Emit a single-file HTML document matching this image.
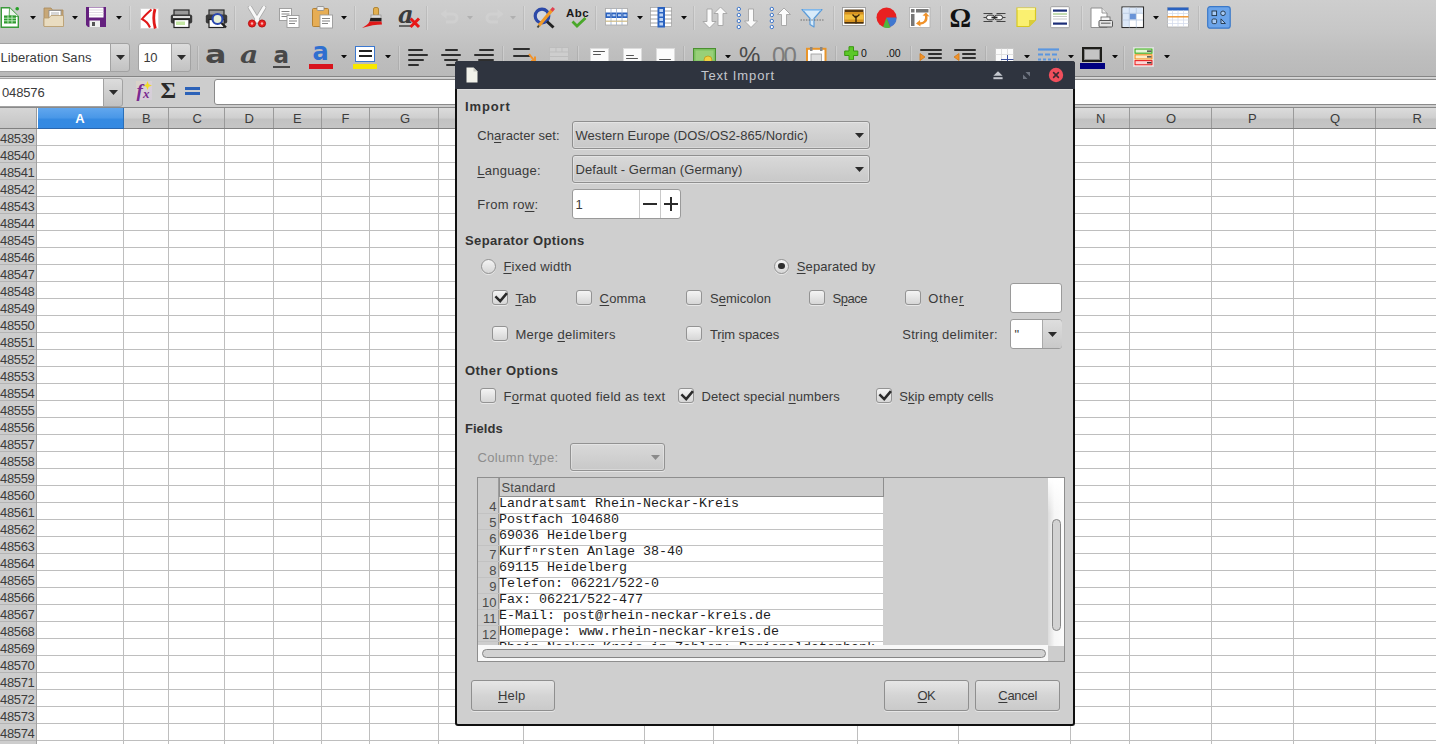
<!DOCTYPE html>
<html><head><meta charset="utf-8"><title>Text Import</title>
<style>
html,body{margin:0;padding:0}
body{width:1436px;height:744px;overflow:hidden;position:relative;background:#fff;font-family:"Liberation Sans", sans-serif;font-size:13px}
div,span,svg{position:absolute;box-sizing:border-box}
u{text-decoration:underline;text-underline-offset:2px;text-decoration-thickness:1px}

.tb{left:0;top:0;width:1436px;height:76px;background:linear-gradient(#cecece,#c7c7c7 30px,#bebebe 55px,#b9b9b9 76px)}
.sep{width:2px;height:24px;border-left:1px solid rgba(0,0,0,.07);border-right:1px solid rgba(255,255,255,.22)}
.arr{width:0;height:0;border-left:3.5px solid transparent;border-right:3.5px solid transparent;border-top:4px solid #111}
.cb{width:16px;height:15px;border:1px solid #939393;border-radius:3px;background:linear-gradient(#f4f4f4,#d6d6d6);box-shadow:0 1px 0 rgba(255,255,255,.5)}
.rb{width:15px;height:15px;border:1px solid #939393;border-radius:8px;background:linear-gradient(#f4f4f4,#d6d6d6);box-shadow:0 1px 0 rgba(255,255,255,.5)}
.btn{border:1px solid #8f8f8f;border-radius:3px;background:linear-gradient(#e6e6e6,#d4d4d4 50%,#cacaca);box-shadow:0 1px 0 rgba(255,255,255,.45)}
.combo{border:1px solid #8f8f8f;border-radius:3px;background:linear-gradient(#d9d9d9,#c8c8c8);box-shadow:0 1px 0 rgba(255,255,255,.45),inset 0 0 0 1px rgba(255,255,255,.3)}
.entry{border:1px solid #9a9a9a;border-radius:3px;background:#fff}
.hl{height:1px;background:#bebebe;left:37px;width:1399px}
.vl{width:1px;background:#bebebe;top:129px;height:615px}
.ch{top:108px;height:21px;background:linear-gradient(#dcdcdc,#cfcfcf 45%,#c2c2c2 55%,#c6c6c6);border-right:1px solid #9a9a9a}

</style></head><body>
<div class="tb"></div><div style="left:0px;top:76px;width:1436px;height:1px;background:#858585"></div><div style="left:0px;top:77px;width:1436px;height:31px;background:#cdcdcd"></div><div style="left:0px;top:77px;width:1436px;height:1px;background:#d6d6d6"></div><div style="left:0px;top:107px;width:1436px;height:1px;background:#8a8a8a"></div><div style="left:0px;top:108px;width:37px;height:21px;background:linear-gradient(#d6d6d6,#c4c4c4);border-right:1px solid #9a9a9a"></div><div class="ch" style="left:38px;width:86px;background:linear-gradient(#62a7ee,#4a98e8 45%,#358ae2 55%,#3489e2);border-right:1px solid #2a6fb8"></div><div class="ch" style="left:124px;width:45px;"></div><div class="ch" style="left:169px;width:56px;"></div><div class="ch" style="left:225px;width:49px;"></div><div class="ch" style="left:274px;width:48px;"></div><div class="ch" style="left:322px;width:48px;"></div><div class="ch" style="left:370px;width:69px;"></div><div class="ch" style="left:439px;width:85px;"></div><div class="ch" style="left:524px;width:121px;"></div><div class="ch" style="left:645px;width:69px;"></div><div class="ch" style="left:714px;width:144px;"></div><div class="ch" style="left:858px;width:101px;"></div><div class="ch" style="left:959px;width:112px;"></div><div class="ch" style="left:1071px;width:59px;"></div><div class="ch" style="left:1130px;width:82px;"></div><div class="ch" style="left:1212px;width:82px;"></div><div class="ch" style="left:1294px;width:82px;"></div><div class="ch" style="left:1376px;width:85px;"></div><div style="left:0px;top:128px;width:1436px;height:1px;background:#808080"></div><div style="left:38px;top:128px;width:86px;height:1px;background:#2a66ae"></div><div style="left:0px;top:129px;width:37px;height:615px;background:#cdcdcd;border-right:1px solid #a2a2a2"></div><div class="hl" style="top:145px"></div><div style="left:0px;top:145px;width:36px;height:1px;background:#b4b4b4"></div><div class="hl" style="top:162px"></div><div style="left:0px;top:162px;width:36px;height:1px;background:#b4b4b4"></div><div class="hl" style="top:179px"></div><div style="left:0px;top:179px;width:36px;height:1px;background:#b4b4b4"></div><div class="hl" style="top:196px"></div><div style="left:0px;top:196px;width:36px;height:1px;background:#b4b4b4"></div><div class="hl" style="top:213px"></div><div style="left:0px;top:213px;width:36px;height:1px;background:#b4b4b4"></div><div class="hl" style="top:230px"></div><div style="left:0px;top:230px;width:36px;height:1px;background:#b4b4b4"></div><div class="hl" style="top:247px"></div><div style="left:0px;top:247px;width:36px;height:1px;background:#b4b4b4"></div><div class="hl" style="top:264px"></div><div style="left:0px;top:264px;width:36px;height:1px;background:#b4b4b4"></div><div class="hl" style="top:281px"></div><div style="left:0px;top:281px;width:36px;height:1px;background:#b4b4b4"></div><div class="hl" style="top:298px"></div><div style="left:0px;top:298px;width:36px;height:1px;background:#b4b4b4"></div><div class="hl" style="top:315px"></div><div style="left:0px;top:315px;width:36px;height:1px;background:#b4b4b4"></div><div class="hl" style="top:332px"></div><div style="left:0px;top:332px;width:36px;height:1px;background:#b4b4b4"></div><div class="hl" style="top:349px"></div><div style="left:0px;top:349px;width:36px;height:1px;background:#b4b4b4"></div><div class="hl" style="top:366px"></div><div style="left:0px;top:366px;width:36px;height:1px;background:#b4b4b4"></div><div class="hl" style="top:383px"></div><div style="left:0px;top:383px;width:36px;height:1px;background:#b4b4b4"></div><div class="hl" style="top:400px"></div><div style="left:0px;top:400px;width:36px;height:1px;background:#b4b4b4"></div><div class="hl" style="top:417px"></div><div style="left:0px;top:417px;width:36px;height:1px;background:#b4b4b4"></div><div class="hl" style="top:434px"></div><div style="left:0px;top:434px;width:36px;height:1px;background:#b4b4b4"></div><div class="hl" style="top:451px"></div><div style="left:0px;top:451px;width:36px;height:1px;background:#b4b4b4"></div><div class="hl" style="top:468px"></div><div style="left:0px;top:468px;width:36px;height:1px;background:#b4b4b4"></div><div class="hl" style="top:485px"></div><div style="left:0px;top:485px;width:36px;height:1px;background:#b4b4b4"></div><div class="hl" style="top:502px"></div><div style="left:0px;top:502px;width:36px;height:1px;background:#b4b4b4"></div><div class="hl" style="top:519px"></div><div style="left:0px;top:519px;width:36px;height:1px;background:#b4b4b4"></div><div class="hl" style="top:536px"></div><div style="left:0px;top:536px;width:36px;height:1px;background:#b4b4b4"></div><div class="hl" style="top:553px"></div><div style="left:0px;top:553px;width:36px;height:1px;background:#b4b4b4"></div><div class="hl" style="top:570px"></div><div style="left:0px;top:570px;width:36px;height:1px;background:#b4b4b4"></div><div class="hl" style="top:587px"></div><div style="left:0px;top:587px;width:36px;height:1px;background:#b4b4b4"></div><div class="hl" style="top:604px"></div><div style="left:0px;top:604px;width:36px;height:1px;background:#b4b4b4"></div><div class="hl" style="top:621px"></div><div style="left:0px;top:621px;width:36px;height:1px;background:#b4b4b4"></div><div class="hl" style="top:638px"></div><div style="left:0px;top:638px;width:36px;height:1px;background:#b4b4b4"></div><div class="hl" style="top:655px"></div><div style="left:0px;top:655px;width:36px;height:1px;background:#b4b4b4"></div><div class="hl" style="top:672px"></div><div style="left:0px;top:672px;width:36px;height:1px;background:#b4b4b4"></div><div class="hl" style="top:689px"></div><div style="left:0px;top:689px;width:36px;height:1px;background:#b4b4b4"></div><div class="hl" style="top:706px"></div><div style="left:0px;top:706px;width:36px;height:1px;background:#b4b4b4"></div><div class="hl" style="top:723px"></div><div style="left:0px;top:723px;width:36px;height:1px;background:#b4b4b4"></div><div class="hl" style="top:740px"></div><div style="left:0px;top:740px;width:36px;height:1px;background:#b4b4b4"></div><div class="vl" style="left:123px"></div><div class="vl" style="left:168px"></div><div class="vl" style="left:224px"></div><div class="vl" style="left:273px"></div><div class="vl" style="left:321px"></div><div class="vl" style="left:369px"></div><div class="vl" style="left:438px"></div><div class="vl" style="left:523px"></div><div class="vl" style="left:644px"></div><div class="vl" style="left:713px"></div><div class="vl" style="left:857px"></div><div class="vl" style="left:958px"></div><div class="vl" style="left:1070px"></div><div class="vl" style="left:1129px"></div><div class="vl" style="left:1211px"></div><div class="vl" style="left:1293px"></div><div class="vl" style="left:1375px"></div><span style="left:75.3px;top:109.50px;line-height:18px;font-size:13px;color:#fff;white-space:pre;font-weight:bold;">A</span><span style="left:142.0px;top:109.50px;line-height:18px;font-size:13px;color:#3c3c3c;white-space:pre;">B</span><span style="left:192.5px;top:109.50px;line-height:18px;font-size:13px;color:#3c3c3c;white-space:pre;">C</span><span style="left:244.5px;top:109.50px;line-height:18px;font-size:13px;color:#3c3c3c;white-space:pre;">D</span><span style="left:293.0px;top:109.50px;line-height:18px;font-size:13px;color:#3c3c3c;white-space:pre;">E</span><span style="left:341.5px;top:109.50px;line-height:18px;font-size:13px;color:#3c3c3c;white-space:pre;">F</span><span style="left:400.0px;top:109.50px;line-height:18px;font-size:13px;color:#3c3c3c;white-space:pre;">G</span><span style="left:1096.0px;top:109.50px;line-height:18px;font-size:13px;color:#3c3c3c;white-space:pre;">N</span><span style="left:1166.0px;top:109.50px;line-height:18px;font-size:13px;color:#3c3c3c;white-space:pre;">O</span><span style="left:1248.0px;top:109.50px;line-height:18px;font-size:13px;color:#3c3c3c;white-space:pre;">P</span><span style="left:1330.0px;top:109.50px;line-height:18px;font-size:13px;color:#3c3c3c;white-space:pre;">Q</span><span style="left:1412.5px;top:109.50px;line-height:18px;font-size:13px;color:#3c3c3c;white-space:pre;">R</span><span style="left:0px;top:129.50px;line-height:18px;font-size:13px;color:#3c3c3c;white-space:pre;letter-spacing:-0.33px;">48539</span><span style="left:0px;top:146.50px;line-height:18px;font-size:13px;color:#3c3c3c;white-space:pre;letter-spacing:-0.33px;">48540</span><span style="left:0px;top:163.50px;line-height:18px;font-size:13px;color:#3c3c3c;white-space:pre;letter-spacing:-0.33px;">48541</span><span style="left:0px;top:180.50px;line-height:18px;font-size:13px;color:#3c3c3c;white-space:pre;letter-spacing:-0.33px;">48542</span><span style="left:0px;top:197.50px;line-height:18px;font-size:13px;color:#3c3c3c;white-space:pre;letter-spacing:-0.33px;">48543</span><span style="left:0px;top:214.50px;line-height:18px;font-size:13px;color:#3c3c3c;white-space:pre;letter-spacing:-0.33px;">48544</span><span style="left:0px;top:231.50px;line-height:18px;font-size:13px;color:#3c3c3c;white-space:pre;letter-spacing:-0.33px;">48545</span><span style="left:0px;top:248.50px;line-height:18px;font-size:13px;color:#3c3c3c;white-space:pre;letter-spacing:-0.33px;">48546</span><span style="left:0px;top:265.50px;line-height:18px;font-size:13px;color:#3c3c3c;white-space:pre;letter-spacing:-0.33px;">48547</span><span style="left:0px;top:282.50px;line-height:18px;font-size:13px;color:#3c3c3c;white-space:pre;letter-spacing:-0.33px;">48548</span><span style="left:0px;top:299.50px;line-height:18px;font-size:13px;color:#3c3c3c;white-space:pre;letter-spacing:-0.33px;">48549</span><span style="left:0px;top:316.50px;line-height:18px;font-size:13px;color:#3c3c3c;white-space:pre;letter-spacing:-0.33px;">48550</span><span style="left:0px;top:333.50px;line-height:18px;font-size:13px;color:#3c3c3c;white-space:pre;letter-spacing:-0.33px;">48551</span><span style="left:0px;top:350.50px;line-height:18px;font-size:13px;color:#3c3c3c;white-space:pre;letter-spacing:-0.33px;">48552</span><span style="left:0px;top:367.50px;line-height:18px;font-size:13px;color:#3c3c3c;white-space:pre;letter-spacing:-0.33px;">48553</span><span style="left:0px;top:384.50px;line-height:18px;font-size:13px;color:#3c3c3c;white-space:pre;letter-spacing:-0.33px;">48554</span><span style="left:0px;top:401.50px;line-height:18px;font-size:13px;color:#3c3c3c;white-space:pre;letter-spacing:-0.33px;">48555</span><span style="left:0px;top:418.50px;line-height:18px;font-size:13px;color:#3c3c3c;white-space:pre;letter-spacing:-0.33px;">48556</span><span style="left:0px;top:435.50px;line-height:18px;font-size:13px;color:#3c3c3c;white-space:pre;letter-spacing:-0.33px;">48557</span><span style="left:0px;top:452.50px;line-height:18px;font-size:13px;color:#3c3c3c;white-space:pre;letter-spacing:-0.33px;">48558</span><span style="left:0px;top:469.50px;line-height:18px;font-size:13px;color:#3c3c3c;white-space:pre;letter-spacing:-0.33px;">48559</span><span style="left:0px;top:486.50px;line-height:18px;font-size:13px;color:#3c3c3c;white-space:pre;letter-spacing:-0.33px;">48560</span><span style="left:0px;top:503.50px;line-height:18px;font-size:13px;color:#3c3c3c;white-space:pre;letter-spacing:-0.33px;">48561</span><span style="left:0px;top:520.50px;line-height:18px;font-size:13px;color:#3c3c3c;white-space:pre;letter-spacing:-0.33px;">48562</span><span style="left:0px;top:537.50px;line-height:18px;font-size:13px;color:#3c3c3c;white-space:pre;letter-spacing:-0.33px;">48563</span><span style="left:0px;top:554.50px;line-height:18px;font-size:13px;color:#3c3c3c;white-space:pre;letter-spacing:-0.33px;">48564</span><span style="left:0px;top:571.50px;line-height:18px;font-size:13px;color:#3c3c3c;white-space:pre;letter-spacing:-0.33px;">48565</span><span style="left:0px;top:588.50px;line-height:18px;font-size:13px;color:#3c3c3c;white-space:pre;letter-spacing:-0.33px;">48566</span><span style="left:0px;top:605.50px;line-height:18px;font-size:13px;color:#3c3c3c;white-space:pre;letter-spacing:-0.33px;">48567</span><span style="left:0px;top:622.50px;line-height:18px;font-size:13px;color:#3c3c3c;white-space:pre;letter-spacing:-0.33px;">48568</span><span style="left:0px;top:639.50px;line-height:18px;font-size:13px;color:#3c3c3c;white-space:pre;letter-spacing:-0.33px;">48569</span><span style="left:0px;top:656.50px;line-height:18px;font-size:13px;color:#3c3c3c;white-space:pre;letter-spacing:-0.33px;">48570</span><span style="left:0px;top:673.50px;line-height:18px;font-size:13px;color:#3c3c3c;white-space:pre;letter-spacing:-0.33px;">48571</span><span style="left:0px;top:690.50px;line-height:18px;font-size:13px;color:#3c3c3c;white-space:pre;letter-spacing:-0.33px;">48572</span><span style="left:0px;top:707.50px;line-height:18px;font-size:13px;color:#3c3c3c;white-space:pre;letter-spacing:-0.33px;">48573</span><span style="left:0px;top:724.50px;line-height:18px;font-size:13px;color:#3c3c3c;white-space:pre;letter-spacing:-0.33px;">48574</span><svg style="left:0px;top:6px;" width="21" height="23" viewBox="0 0 21 23"><path d="M1.300 1.800h8.200l8.800 8.800v10.600h-17z" fill="#fff" stroke="#3a9a3a" stroke-width="1.400"/><path d="M9.500 1.800l-0.300 8 9.100 0.800" fill="#eaf4ea" stroke="#3a9a3a" stroke-width="0.800" stroke-linejoin="round"/><circle cx="17.200" cy="2.800" r="1.800" fill="#25a025"/><rect x="4" y="9.5" width="12" height="8" fill="#2f9a2f"/><path d="M4 12.2h12M4 14.8h12M8 9.5v8M12 9.5v8" stroke="#c8f0c8" stroke-width="0.9"/></svg><svg style="left:29.5px;top:16.0px;opacity:1" width="6" height="3.5" viewBox="0 0 6 3.5"><path d="M0 0h6l-3 3.5z" fill="#0c0c0c"/></svg><svg style="left:43px;top:7px;" width="22" height="21" viewBox="0 0 22 21"><path d="M1 1h7l1.5 2H20v16H1z" fill="#c8a878" stroke="#a88958" stroke-width="0.8"/><rect x="6" y="3.5" width="12" height="9" fill="#fff" stroke="#888" stroke-width="0.8"/><path d="M8 6h8M8 8h8" stroke="#999" stroke-width="0.8"/><path d="M1 19.5V11h5l2-2.5h12.5v11z" fill="#e9dcc0" stroke="#b89c6c" stroke-width="0.8"/></svg><svg style="left:71.5px;top:16.0px;opacity:1" width="6" height="3.5" viewBox="0 0 6 3.5"><path d="M0 0h6l-3 3.5z" fill="#0c0c0c"/></svg><svg style="left:85px;top:6px;" width="22" height="22" viewBox="0 0 22 22"><path d="M1 1h20v20H3l-2-2z" fill="#64207e"/><rect x="4" y="1.5" width="14.5" height="10" fill="#fff"/><path d="M4 4h14.5M4 6.5h14.5M4 9h14.5" stroke="#d8d0dc" stroke-width="0.8"/><rect x="4.5" y="14.5" width="10.5" height="6.5" fill="#f0f0f0"/><rect x="7" y="16" width="3" height="4" fill="#555"/></svg><svg style="left:115.5px;top:16.0px;opacity:1" width="6" height="3.5" viewBox="0 0 6 3.5"><path d="M0 0h6l-3 3.5z" fill="#0c0c0c"/></svg><div class="sep" style="left:129px;top:6px"></div><svg style="left:140px;top:8px;" width="20" height="22" viewBox="0 0 20 22"><rect x="0.500" y="0.500" width="18" height="20" fill="#fff" stroke="#d4d4d4" stroke-width="0.800"/><path d="M11.500 1.500C7 5.500 4 8.500 2 11c3 1.500 6 4 8 8.500" fill="none" stroke="#e01818" stroke-width="2"/><path d="M15 1c-1.800 6-1.800 12 0.300 19.500" fill="none" stroke="#e01818" stroke-width="2.800"/></svg><svg style="left:170px;top:9px;" width="23" height="20" viewBox="0 0 23 20"><rect x="4" y="1" width="15" height="6" fill="#9a9a9a" stroke="#2a2a2a" stroke-width="1.200"/><rect x="0.800" y="5.500" width="21.400" height="9" rx="2" fill="#3a3a3a"/><rect x="3" y="7" width="17" height="2" fill="#ddd"/><rect x="4" y="10.500" width="15" height="8" fill="#fff" stroke="#222" stroke-width="1.200"/><rect x="6" y="12.500" width="9" height="3.500" fill="#c4e6a4"/></svg><svg style="left:205px;top:9px;" width="23" height="20" viewBox="0 0 23 20"><rect x="4" y="1" width="15" height="6" fill="#9a9a9a" stroke="#2a2a2a" stroke-width="1.200"/><rect x="0.800" y="5.5" width="21.400" height="9" rx="2" fill="#3a3a3a"/><rect x="4" y="10.500" width="15" height="8" fill="#fff" stroke="#222" stroke-width="1.2"/><circle cx="12.500" cy="10" r="5" fill="#e8f0d8" stroke="#2a48b0" stroke-width="2.2"/><path d="M16.500 14l4.500 4.500" stroke="#222" stroke-width="2.400"/></svg><div class="sep" style="left:234px;top:6px"></div><svg style="left:246px;top:6px;" width="22" height="23" viewBox="0 0 22 23"><path d="M4 1.500l8.500 14M18 1.500l-8.500 14" stroke="#a8a8a8" stroke-width="4.400" stroke-linecap="round"/><path d="M4 1.500l8.500 14M18 1.500l-8.500 14" stroke="#f8f8f8" stroke-width="3" stroke-linecap="round"/><circle cx="6" cy="17.500" r="3.600" fill="#e82020" stroke="#a00" stroke-width="0.800"/><circle cx="16" cy="17.500" r="3.600" fill="#e82020" stroke="#a00" stroke-width="0.800"/><circle cx="6" cy="17.500" r="1.200" fill="#f8b0b0"/><circle cx="16" cy="17.500" r="1.200" fill="#f8b0b0"/></svg><svg style="left:279px;top:8px;" width="21" height="21" viewBox="0 0 21 21"><rect x="0.500" y="0.500" width="12" height="12" fill="#fff" stroke="#9a9a9a" stroke-width="0.900"/><path d="M2.500 3.500h8M2.500 6h8M2.500 8.500h6" stroke="#777" stroke-width="0.900"/><rect x="8" y="7.500" width="12" height="12" fill="#fff" stroke="#9a9a9a" stroke-width="0.900"/><path d="M10 10.500h8M10 13h8M10 15.500h6" stroke="#777" stroke-width="0.900"/></svg><svg style="left:312px;top:6px;" width="22" height="23" viewBox="0 0 22 23"><rect x="0.500" y="2.500" width="16" height="18" rx="1" fill="#e6ad55" stroke="#b07a28" stroke-width="0.900"/><rect x="5" y="0.500" width="7" height="4" rx="1" fill="#eee" stroke="#888" stroke-width="0.800"/><rect x="8" y="9" width="12.500" height="13" fill="#fff" stroke="#9a9a9a" stroke-width="0.900"/><path d="M10 12.500h8M10 15h8M10 17.500h6" stroke="#777" stroke-width="0.900"/></svg><svg style="left:341px;top:16.0px;opacity:1" width="6" height="3.5" viewBox="0 0 6 3.5"><path d="M0 0h6l-3 3.5z" fill="#0c0c0c"/></svg><div class="sep" style="left:353.5px;top:6px"></div><svg style="left:361px;top:7px;" width="24" height="22" viewBox="0 0 24 22"><rect x="12.500" y="0.500" width="5" height="8" rx="1.500" fill="#e2b050" stroke="#a87820" stroke-width="0.800"/><rect x="10" y="8" width="10" height="3" fill="#ddd" stroke="#888" stroke-width="0.600"/><path d="M9.500 11h11v3.500h-12z" fill="#222"/><path d="M8.500 14.500h12l0.500 3c-6 0-12 1-20 3.500 4-2.500 6.500-4 7.500-6.500z" fill="#e01818"/></svg><span style="left:398px;top:-1.82px;line-height:34px;font-size:24px;color:#3c3c3c;white-space:pre;font-weight:bold;font-family:'DejaVu Serif', serif;font-style:italic;">a</span><svg style="left:398px;top:7px;" width="24" height="22" viewBox="0 0 24 22"><path d="M1 19h13" stroke="#3c3c3c" stroke-width="1.400"/><path d="M12.500 11.500l8.500 8.500M21 11.500l-8.500 8.500" stroke="#e81818" stroke-width="3"/></svg><div class="sep" style="left:426px;top:6px"></div><svg style="left:440px;top:8px;opacity:.5" width="20" height="18" viewBox="0 0 20 18"><path d="M3 6h10a4 4 0 0 1 0 8H6" fill="none" stroke="#d6d6d6" stroke-width="3"/><path d="M0.500 6l6-5v10z" fill="#d6d6d6"/></svg><svg style="left:467px;top:16.0px;opacity:0.6" width="6" height="3.5" viewBox="0 0 6 3.5"><path d="M0 0h6l-3 3.5z" fill="#a0a0a0"/></svg><svg style="left:484px;top:8px;opacity:.5" width="20" height="18" viewBox="0 0 20 18"><path d="M17 6H7a4 4 0 0 0 0 8h7" fill="none" stroke="#d6d6d6" stroke-width="3"/><path d="M19.500 6l-6-5v10z" fill="#d6d6d6"/></svg><svg style="left:510px;top:16.0px;opacity:0.6" width="6" height="3.5" viewBox="0 0 6 3.5"><path d="M0 0h6l-3 3.5z" fill="#a0a0a0"/></svg><div class="sep" style="left:522.5px;top:6px"></div><svg style="left:533px;top:6px;" width="24" height="23" viewBox="0 0 24 23"><circle cx="9" cy="10" r="6.800" fill="#d4d8e0" stroke="#2c49a8" stroke-width="3.200"/><path d="M14 15.500l6.500 6" stroke="#222" stroke-width="3"/><path d="M19.500 3.500L6 19.500" stroke="#f09a28" stroke-width="3.200"/><path d="M20.800 2l-2.300 2.700" stroke="#e04050" stroke-width="3.200"/><path d="M6 19.500l-1.500 2" stroke="#443" stroke-width="2"/></svg><svg style="left:566px;top:22px;" width="0" height="0" viewBox="0 0 0 0"></svg><span style="left:566px;top:4.52px;line-height:16px;font-size:11.5px;color:#1a1a1a;white-space:pre;font-weight:bold;letter-spacing:0.42px;">Abc</span><svg style="left:571px;top:17px;" width="16" height="11" viewBox="0 0 16 11"><path d="M1.500 4.500l4.500 4.500 8.500-8" fill="none" stroke="#4aa82a" stroke-width="2.800"/></svg><div class="sep" style="left:594.5px;top:6px"></div><svg style="left:605px;top:8px;" width="24" height="18" viewBox="0 0 24 18"><rect x="0.500" y="0.500" width="22" height="16.500" fill="#fff" stroke="#a8a8a8" stroke-width="0.800"/><rect x="0.500" y="4.500" width="22" height="5.500" fill="#2a62c0"/><path d="M0.500 13.200h22M6 0.500v16.500M11.500 0.500v16.500M17 0.500v16.500" stroke="#9ab0d0" stroke-width="0.800"/><path d="M0.500 13.200h22" stroke="#e8c060" stroke-width="0.800"/><path d="M2 7.200h3M7.500 7.200h3M13 7.200h3M18.500 7.200h3" stroke="#bcd4f6" stroke-width="2"/></svg><svg style="left:637px;top:16.0px;opacity:1" width="6" height="3.5" viewBox="0 0 6 3.5"><path d="M0 0h6l-3 3.5z" fill="#0c0c0c"/></svg><svg style="left:650px;top:7px;" width="23" height="21" viewBox="0 0 23 21"><rect x="0.500" y="0.500" width="21" height="19" fill="#fff" stroke="#a8a8a8" stroke-width="0.800"/><path d="M0.500 4h21M0.500 8h21M0.500 12h21M0.500 16h21" stroke="#8a8a8a" stroke-width="0.800"/><rect x="7.500" y="0" width="7.500" height="20.500" fill="#2a62c0"/><path d="M11.200 2v3M11.200 6.500v3M11.200 11v3M11.200 15.500v3" stroke="#bcd4f6" stroke-width="3.600"/></svg><svg style="left:681px;top:16.0px;opacity:1" width="6" height="3.5" viewBox="0 0 6 3.5"><path d="M0 0h6l-3 3.5z" fill="#0c0c0c"/></svg><div class="sep" style="left:692.5px;top:6px"></div><svg style="left:702px;top:6px;" width="26" height="24" viewBox="0 0 26 24"><path d="M7.5 22l6.5 -6.500h-4.0v-12.5h-5.0v12.5h-4.0z" fill="#fbfbfb" stroke="#a4a4a4" stroke-width="0.900" stroke-linejoin="round"/><path d="M18.5 1l6.5 6.500h-4.0v12.0h-5.0v-12.0h-4.0z" fill="#fbfbfb" stroke="#a4a4a4" stroke-width="0.900" stroke-linejoin="round"/></svg><svg style="left:736px;top:6px;" width="23" height="24" viewBox="0 0 23 24"><circle cx="2.800" cy="3" r="1.700" fill="#fff" stroke="#3b74c8" stroke-width="1"/><circle cx="2.800" cy="9" r="1.700" fill="#fff" stroke="#3b74c8" stroke-width="1"/><circle cx="2.800" cy="15" r="1.700" fill="#fff" stroke="#3b74c8" stroke-width="1"/><circle cx="2.800" cy="21" r="1.700" fill="#fff" stroke="#3b74c8" stroke-width="1"/><path d="M15 21.5l6.5 -6.500h-4.0v-12.0h-5.0v12.0h-4.0z" fill="#fbfbfb" stroke="#a4a4a4" stroke-width="0.900" stroke-linejoin="round"/></svg><svg style="left:769px;top:6px;" width="23" height="24" viewBox="0 0 23 24"><circle cx="2.800" cy="3" r="1.700" fill="#fff" stroke="#3b74c8" stroke-width="1"/><circle cx="2.800" cy="9" r="1.700" fill="#fff" stroke="#3b74c8" stroke-width="1"/><circle cx="2.800" cy="15" r="1.700" fill="#fff" stroke="#3b74c8" stroke-width="1"/><circle cx="2.800" cy="21" r="1.700" fill="#fff" stroke="#3b74c8" stroke-width="1"/><path d="M15 2l6.5 6.500h-4.0v11.0h-5.0v-11.0h-4.0z" fill="#fbfbfb" stroke="#a4a4a4" stroke-width="0.900" stroke-linejoin="round"/></svg><svg style="left:800px;top:8px;" width="24" height="22" viewBox="0 0 24 22"><path d="M2 1.500h20l-8 9v8.500l-4-2.500v-6z" fill="#d8ebfa" stroke="#5b9bd8" stroke-width="1.200" stroke-linejoin="round"/><path d="M0.500 12h23" stroke="#555" stroke-width="0.800" stroke-dasharray="1.500 1.200"/><path d="M3 2h18" stroke="#8cc0f0" stroke-width="1.500"/></svg><div class="sep" style="left:833px;top:6px"></div><svg style="left:842px;top:7px;" width="25" height="20" viewBox="0 0 25 20"><rect x="0.500" y="0.500" width="23" height="18" fill="#fff" stroke="#9a9a9a" stroke-width="0.900"/><rect x="2.500" y="2.500" width="19" height="14" fill="#5a3a10"/><rect x="2.500" y="5" width="19" height="10" fill="#d89420"/><rect x="2.500" y="7.500" width="19" height="5" fill="#f2c040"/><path d="M14 16.500v-8M14 11l-3.500-3.500M14 10.500l3.500-3" stroke="#3a2408" stroke-width="1.400"/><rect x="2.500" y="15" width="19" height="1.500" fill="#4a300c"/></svg><svg style="left:876px;top:7px;" width="22" height="22" viewBox="0 0 22 22"><circle cx="10.500" cy="10.500" r="10" fill="#e82020"/><path d="M10.500 10.500L7 20a10 10 0 0 0 7.500 0.500z" fill="#4cb840"/><path d="M10.500 10.500h10a10 10 0 0 1-6 9.500z" fill="#3f78d0"/></svg><svg style="left:909px;top:7px;" width="22" height="22" viewBox="0 0 22 22"><rect x="0.500" y="0.500" width="20.500" height="20" fill="#fff" stroke="#b0b0b0" stroke-width="0.800"/><rect x="2" y="2" width="3.500" height="3.500" fill="#777"/><rect x="7" y="2" width="12.500" height="3.500" fill="#777"/><rect x="2" y="7" width="3.500" height="12" fill="#777"/><path d="M17 8.500c1.500 5-2 8.500-7 8" fill="none" stroke="#f0922a" stroke-width="2.400"/><path d="M13.500 8.500l3.500-3 3.500 4z" fill="#f0922a"/><path d="M11 13l-4 3.500 4.500 3z" fill="#f0922a"/></svg><div class="sep" style="left:940px;top:6px"></div><span style="left:949.5px;top:-1.36px;line-height:38px;font-size:27px;color:#111;white-space:pre;font-weight:bold;font-family:'Liberation Serif', serif;">&#937;</span><svg style="left:983px;top:11px;" width="23" height="13" viewBox="0 0 23 13"><path d="M0.500 2.500h9M0.500 6.500h4M0.500 10.500h9M13.500 2.500h9M18 6.500h4.500M13.500 10.500h9" stroke="#444" stroke-width="1.100"/><rect x="3.500" y="4.200" width="8" height="4.600" rx="2.300" fill="#f4f4f4" stroke="#333" stroke-width="1"/><rect x="11.500" y="4.200" width="8" height="4.600" rx="2.300" fill="#f4f4f4" stroke="#333" stroke-width="1"/><path d="M8.500 6.500h6" stroke="#222" stroke-width="1.600"/></svg><svg style="left:1016px;top:7px;" width="21" height="21" viewBox="0 0 21 21"><path d="M1 1h18.500v12l-6.500 6.500H1z" fill="#faf070" stroke="#d8c820" stroke-width="1.200"/><path d="M19.500 13h-6.500v6.500z" fill="#d9cc3a"/><path d="M1.500 2h17.500" stroke="#fffcc0" stroke-width="1.500"/></svg><svg style="left:1050px;top:6px;" width="21" height="23" viewBox="0 0 21 23"><rect x="0.700" y="0.700" width="18.600" height="21" rx="1" fill="#fff" stroke="#a0a0a0" stroke-width="1"/><rect x="3" y="3.500" width="14" height="2.200" fill="#1c2e78"/><path d="M3 8h14" stroke="#88b860" stroke-width="1"/><path d="M3 10.500h14M3 13h14" stroke="#c8c8c8" stroke-width="1"/><rect x="3" y="16.500" width="14" height="2.200" fill="#1c2e78"/></svg><div class="sep" style="left:1081px;top:6px"></div><svg style="left:1090px;top:7px;" width="24" height="22" viewBox="0 0 24 22"><path d="M1 1h11l5 5v14.500H1z" fill="#fff" stroke="#8f8f8f" stroke-width="1"/><path d="M12 1v5h5" fill="#eee" stroke="#8f8f8f" stroke-width="0.900"/><rect x="11" y="10" width="9" height="4" fill="#f4f4f4" stroke="#666" stroke-width="0.800"/><rect x="9" y="13.500" width="13.500" height="6.500" rx="1" fill="#e4e4e4" stroke="#555" stroke-width="1"/><rect x="11" y="15.500" width="9.500" height="1.500" fill="#888"/></svg><svg style="left:1121px;top:6px;" width="24" height="23" viewBox="0 0 24 23"><rect x="1" y="1" width="21.500" height="20.500" fill="#fff" stroke="#2b2b2b" stroke-width="1.100"/><rect x="1.700" y="1.700" width="6.500" height="19" fill="#dce8f8"/><rect x="1.700" y="1.700" width="20" height="5.500" fill="#dce8f8"/><rect x="8.500" y="7.500" width="6.500" height="6" fill="#6a94d8"/><path d="M8.300 1.500v20M15.300 1.500v20M1.500 7.300h20.500M1.500 14h20.500" stroke="#b8c8e0" stroke-width="0.800"/></svg><svg style="left:1153px;top:16.0px;opacity:1" width="6" height="3.5" viewBox="0 0 6 3.5"><path d="M0 0h6l-3 3.5z" fill="#0c0c0c"/></svg><svg style="left:1167px;top:7px;" width="23" height="21" viewBox="0 0 23 21"><rect x="0.500" y="0.500" width="21" height="19.500" fill="#fff" stroke="#b0b0b0" stroke-width="0.800"/><rect x="0.500" y="0.500" width="21" height="3" fill="#2a62c0"/><path d="M0.500 6.500h21M0.500 13h21M0.500 16.500h21M5.500 3.500v16.500M11 3.500v16.500M16.500 3.500v16.500" stroke="#d4dcec" stroke-width="0.800"/><path d="M0.500 9.800h21" stroke="#f0922a" stroke-width="1.400"/></svg><div class="sep" style="left:1198px;top:6px"></div><svg style="left:1207px;top:6px;" width="24" height="23" viewBox="0 0 24 23"><rect x="0.700" y="0.700" width="22.500" height="21.500" rx="2.500" fill="#6ba4ea" stroke="#3a78c8" stroke-width="1.200"/><rect x="5" y="5" width="4.600" height="4.600" fill="#a8cbf6" stroke="#234" stroke-width="0.900"/><circle cx="16" cy="7.300" r="2.300" fill="#a8cbf6" stroke="#234" stroke-width="0.900"/><rect x="5" y="13" width="4.600" height="4.600" rx="1.300" fill="#a8cbf6" stroke="#234" stroke-width="0.900"/><path d="M14 17.500v-4.600l4.400 4.600z" fill="#a8cbf6" stroke="#234" stroke-width="0.900"/></svg><div style="left:-4px;top:43px;width:115px;height:29px;background:#fff;border:1px solid #a2a2a2;border-radius:3px 0 0 3px"></div><div style="left:110px;top:43px;width:20px;height:29px;background:linear-gradient(#dcdcdc,#c2c2c2);border:1px solid #a2a2a2;border-radius:0 3px 3px 0"></div><span style="left:0.5px;top:48.50px;line-height:18px;font-size:13px;color:#3a3a3a;white-space:pre;letter-spacing:0.04px;">Liberation Sans</span><svg style="left:115.500px;top:54.500px" width="9" height="5" viewBox="0 0 9 5"><path d="M0 0h9l-4.500 5z" fill="#2b2b2b"/></svg><div style="left:138px;top:43px;width:34px;height:29px;background:#fff;border:1px solid #a2a2a2;border-radius:3px 0 0 3px"></div><div style="left:171px;top:43px;width:20px;height:29px;background:linear-gradient(#dcdcdc,#c2c2c2);border:1px solid #a2a2a2;border-radius:0 3px 3px 0"></div><span style="left:143.5px;top:48.50px;line-height:18px;font-size:13px;color:#3a3a3a;white-space:pre;letter-spacing:-0.48px;">10</span><svg style="left:176.500px;top:54.500px" width="9" height="5" viewBox="0 0 9 5"><path d="M0 0h9l-4.500 5z" fill="#2b2b2b"/></svg><div class="sep" style="left:197px;top:46px"></div><span style="left:205px;top:37.34px;line-height:35px;font-size:25px;color:#484848;white-space:pre;font-weight:bold;font-family:'DejaVu Sans', sans-serif;transform:scaleX(1.27);transform-origin:0 0;">a</span><span style="left:240px;top:37.34px;line-height:35px;font-size:25px;color:#484848;white-space:pre;font-weight:bold;font-family:'DejaVu Serif', serif;font-style:italic;transform:scaleX(1.13);transform-origin:0 0;">a</span><span style="left:273.5px;top:39.03px;line-height:32px;font-size:23px;color:#484848;white-space:pre;font-weight:bold;font-family:'DejaVu Sans', sans-serif;">a</span><div style="left:273px;top:66px;width:17px;height:1.5px;background:#484848"></div><span style="left:312.5px;top:34.68px;line-height:34px;font-size:24px;color:#2f6fd0;white-space:pre;font-weight:bold;font-family:'DejaVu Sans', sans-serif;">a</span><div style="left:309px;top:63.5px;width:24px;height:5.5px;background:#d8141c"></div><svg style="left:341px;top:54.5px;opacity:1" width="6" height="3.5" viewBox="0 0 6 3.5"><path d="M0 0h6l-3 3.5z" fill="#0c0c0c"/></svg><div style="left:355px;top:46px;width:20px;height:15.5px;background:#fff;border:1.500px solid #3b78d0"></div><div style="left:358.5px;top:50px;width:13px;height:1.8px;background:#222"></div><div style="left:358.5px;top:55px;width:13px;height:1.8px;background:#222"></div><div style="left:352.5px;top:63.5px;width:24.5px;height:5.5px;background:#f8e800"></div><svg style="left:385px;top:54.5px;opacity:1" width="6" height="3.5" viewBox="0 0 6 3.5"><path d="M0 0h6l-3 3.5z" fill="#0c0c0c"/></svg><div class="sep" style="left:397.5px;top:46px"></div><div style="left:408px;top:48.5px;width:15px;height:2px;background:#2e2e2e;border-radius:1px"></div><div style="left:408px;top:53.5px;width:20px;height:2px;background:#2e2e2e;border-radius:1px"></div><div style="left:408px;top:58.5px;width:16px;height:2px;background:#2e2e2e;border-radius:1px"></div><div style="left:408px;top:63.5px;width:11px;height:2px;background:#2e2e2e;border-radius:1px"></div><div style="left:444.5px;top:48.5px;width:13px;height:2px;background:#2e2e2e;border-radius:1px"></div><div style="left:441.0px;top:53.5px;width:20px;height:2px;background:#2e2e2e;border-radius:1px"></div><div style="left:444.0px;top:58.5px;width:14px;height:2px;background:#2e2e2e;border-radius:1px"></div><div style="left:446.0px;top:63.5px;width:10px;height:2px;background:#2e2e2e;border-radius:1px"></div><div style="left:479px;top:48.5px;width:15px;height:2px;background:#2e2e2e;border-radius:1px"></div><div style="left:474px;top:53.5px;width:20px;height:2px;background:#2e2e2e;border-radius:1px"></div><div style="left:478px;top:58.5px;width:16px;height:2px;background:#2e2e2e;border-radius:1px"></div><div style="left:483px;top:63.5px;width:11px;height:2px;background:#2e2e2e;border-radius:1px"></div><div class="sep" style="left:502px;top:46px"></div><div style="left:513px;top:48px;width:17px;height:2px;background:#2e2e2e;border-radius:1px"></div><div style="left:513px;top:55px;width:17px;height:2px;background:#2e2e2e;border-radius:1px"></div><svg style="left:528px;top:53px;" width="8" height="9" viewBox="0 0 8 9"><path d="M1 1l5.500 7M3 8h4V3.500" fill="none" stroke="#f0922a" stroke-width="2"/></svg><svg style="left:549px;top:47px;opacity:.8" width="20" height="14" viewBox="0 0 20 14"><rect x="0.500" y="0.500" width="19" height="13" fill="#d2d2d2" stroke="#bdbdbd"/><path d="M0.500 5h19M0.500 9.500h19M7 0.500v4.500M13 0.500v4.500" stroke="#bdbdbd"/></svg><div class="sep" style="left:577px;top:46px"></div><div style="left:590px;top:47.5px;width:18.5px;height:16px;background:#fbfbfb;border:1px solid #dcdcdc"></div><div style="left:623px;top:47.5px;width:18.5px;height:16px;background:#fbfbfb;border:1px solid #dcdcdc"></div><div style="left:656px;top:47.5px;width:18.5px;height:16px;background:#fbfbfb;border:1px solid #dcdcdc"></div><div style="left:593px;top:51px;width:12px;height:1.2px;background:#555;border-radius:1px"></div><div style="left:593px;top:54px;width:8px;height:1.2px;background:#555;border-radius:1px"></div><div style="left:626px;top:55px;width:8px;height:1.2px;background:#555;border-radius:1px"></div><div style="left:626px;top:58px;width:12px;height:1.2px;background:#555;border-radius:1px"></div><div style="left:659px;top:59px;width:12px;height:1.2px;background:#555;border-radius:1px"></div><div class="sep" style="left:683px;top:46px"></div><svg style="left:693px;top:48px;" width="23" height="16" viewBox="0 0 23 16"><rect x="0.500" y="0.500" width="22" height="14" fill="#7cc060" stroke="#4a9030" stroke-width="1"/><rect x="2.500" y="2.500" width="18" height="10" fill="#98d078"/><circle cx="15" cy="12" r="4" fill="#f0d040" stroke="#b89820" stroke-width="0.800"/></svg><svg style="left:725px;top:54.5px;opacity:1" width="6" height="3.5" viewBox="0 0 6 3.5"><path d="M0 0h6l-3 3.5z" fill="#0c0c0c"/></svg><span style="left:739px;top:39.18px;line-height:34px;font-size:24px;color:#4a4a4a;white-space:pre;">%</span><span style="left:772px;top:38.68px;line-height:34px;font-size:24px;color:#7c7c7c;white-space:pre;letter-spacing:-1.85px;">00</span><svg style="left:806px;top:47px;" width="21" height="17" viewBox="0 0 21 17"><rect x="1" y="1.800" width="18.500" height="15" fill="#fff" stroke="#e89428" stroke-width="2"/><rect x="4" y="0" width="2.500" height="4" fill="#888"/><rect x="14" y="0" width="2.500" height="4" fill="#888"/><rect x="5" y="7" width="10.500" height="9" fill="#e0e0e0" stroke="#999" stroke-width="0.800"/></svg><div class="sep" style="left:835px;top:46px"></div><svg style="left:844px;top:45.5px;" width="15" height="14" viewBox="0 0 15 14"><path d="M5 0.700h4.500v4.300h4.300v4.500h-4.300v4.300H5v-4.300H0.700V5H5z" fill="#5cc828" stroke="#3a9810" stroke-width="1"/></svg><span style="left:861px;top:46.36px;line-height:15px;font-size:10.5px;color:#111;white-space:pre;">0</span><span style="left:886px;top:46.36px;line-height:15px;font-size:10.5px;color:#111;white-space:pre;letter-spacing:-0.04px;">.00</span><div class="sep" style="left:909.5px;top:46px"></div><div style="left:920px;top:48.5px;width:22px;height:2px;background:#2e2e2e;border-radius:1px"></div><div style="left:928px;top:52.7px;width:14px;height:2px;background:#2e2e2e;border-radius:1px"></div><div style="left:928px;top:56.9px;width:14px;height:2px;background:#2e2e2e;border-radius:1px"></div><div style="left:920px;top:61.1px;width:22px;height:2px;background:#2e2e2e;border-radius:1px"></div><svg style="left:919px;top:51.5px;" width="8" height="10" viewBox="0 0 8 10"><path d="M1 1.500l5 3.500-5 3.500z" fill="#f0922a" stroke="#d07818" stroke-width="0.800"/></svg><div style="left:954px;top:48.5px;width:22px;height:2px;background:#2e2e2e;border-radius:1px"></div><div style="left:962px;top:52.7px;width:14px;height:2px;background:#2e2e2e;border-radius:1px"></div><div style="left:962px;top:56.9px;width:14px;height:2px;background:#2e2e2e;border-radius:1px"></div><div style="left:954px;top:61.1px;width:22px;height:2px;background:#2e2e2e;border-radius:1px"></div><svg style="left:952px;top:51.5px;" width="8" height="10" viewBox="0 0 8 10"><path d="M7 1.500l-5 3.500 5 3.500z" fill="#f0922a" stroke="#d07818" stroke-width="0.800"/></svg><div class="sep" style="left:985px;top:46px"></div><svg style="left:995px;top:48px;" width="19" height="16" viewBox="0 0 19 16"><rect x="0.500" y="0.500" width="18" height="18" fill="#fbfbfb" stroke="#c8c8c8"/><path d="M6.500 0.500v18M12.500 0.500v18M0.500 6.500h18" stroke="#d8d8d8" stroke-width="0.800"/><path d="M6 11.500h12.500M12.500 7v9" stroke="#3b50a0" stroke-width="1"/></svg><svg style="left:1024px;top:54.5px;opacity:1" width="6" height="3.5" viewBox="0 0 6 3.5"><path d="M0 0h6l-3 3.5z" fill="#0c0c0c"/></svg><svg style="left:1038px;top:47.5px;" width="21" height="16" viewBox="0 0 21 16"><path d="M0 1.500h21" stroke="#5a96e0" stroke-width="2.200"/><path d="M0 6.500h21" stroke="#5a96e0" stroke-width="2" stroke-dasharray="5 2"/><path d="M0 11.500h21" stroke="#5a96e0" stroke-width="2" stroke-dasharray="3 2"/></svg><svg style="left:1068px;top:54.5px;opacity:1" width="6" height="3.5" viewBox="0 0 6 3.5"><path d="M0 0h6l-3 3.5z" fill="#0c0c0c"/></svg><div style="left:1082px;top:46.5px;width:20px;height:15px;background:#c4c4c4;border:2.500px solid #1e1e1a;box-shadow:inset 0 0 0 1px #8a8a8a"></div><div style="left:1080px;top:63px;width:24.5px;height:6px;background:#000080"></div><svg style="left:1111.5px;top:54.5px;opacity:1" width="6" height="3.5" viewBox="0 0 6 3.5"><path d="M0 0h6l-3 3.5z" fill="#0c0c0c"/></svg><div class="sep" style="left:1123px;top:46px"></div><svg style="left:1133px;top:46.5px;" width="21" height="20" viewBox="0 0 21 20"><rect x="0.500" y="0.500" width="20" height="19" fill="#fff" stroke="#dedede"/><rect x="2" y="2" width="17" height="4.200" fill="#e4f6d8" stroke="#38a818" stroke-width="1.100"/><rect x="2" y="7.800" width="17" height="4.200" fill="#fdecc8" stroke="#f08a18" stroke-width="1.100"/><rect x="2" y="13.600" width="17" height="4.200" fill="#fbd4d4" stroke="#e82020" stroke-width="1.100"/><path d="M14 4.100h4.500M14 9.900h4.500M14 15.700h4.500" stroke="#333" stroke-width="1.400"/></svg><svg style="left:1163.5px;top:54.5px;opacity:1" width="6" height="3.5" viewBox="0 0 6 3.5"><path d="M0 0h6l-3 3.5z" fill="#0c0c0c"/></svg><div style="left:-4px;top:78px;width:108px;height:29px;background:#fff;border:1px solid #a2a2a2;border-radius:3px 0 0 3px"></div><div style="left:103px;top:78px;width:20px;height:29px;background:linear-gradient(#dcdcdc,#c2c2c2);border:1px solid #a2a2a2;border-radius:0 3px 3px 0"></div><span style="left:2px;top:83.50px;line-height:18px;font-size:13px;color:#3a3a3a;white-space:pre;letter-spacing:-0.15px;">048576</span><svg style="left:108.500px;top:90px" width="9" height="5" viewBox="0 0 9 5"><path d="M0 0h9l-4.500 5z" fill="#2b2b2b"/></svg><div style="left:136px;top:81px;width:16px;height:19px;background:linear-gradient(135deg,#e8dcc0,#e6d0ec 60%,#dcd0e0);opacity:.45"></div><svg style="left:143px;top:80.5px;" width="9" height="9" viewBox="0 0 9 9"><path d="M4.500 0l1.200 3.300 3.300 1.200-3.300 1.200-1.200 3.300-1.200-3.300L0 4.500l3.300-1.200z" fill="#f2dc28"/></svg><span style="left:136.5px;top:77.42px;line-height:27px;font-size:19px;color:#7a2a90;white-space:pre;font-weight:bold;font-family:'Liberation Serif', serif;font-style:italic;">f</span><span style="left:143px;top:84.50px;line-height:18px;font-size:13px;color:#7a2a90;white-space:pre;font-weight:bold;font-family:'Liberation Serif', serif;font-style:italic;">x</span><span style="left:160.5px;top:73.48px;line-height:34px;font-size:24px;color:#2a2a2a;white-space:pre;font-weight:bold;font-family:'Liberation Serif', serif;">&#931;</span><div style="left:185px;top:87px;width:15px;height:3.2px;background:#2c62b8"></div><div style="left:185px;top:92px;width:15px;height:3.2px;background:#2c62b8"></div><div style="left:214px;top:79px;width:1240px;height:26px;background:#fff;border:1px solid #8a8a8a;border-radius:3px"></div><div style="left:455px;top:61px;width:620px;height:665px;background:#cfcfcf;border:2px solid #101010;border-top:none;border-radius:3px 3px 3px 3px"></div><div style="left:455px;top:61px;width:620px;height:28px;background:#2f343f;border-radius:3px 3px 0 0"></div><div style="left:457px;top:89px;width:616px;height:1px;background:#dadada"></div><svg style="left:466px;top:67px" width="12" height="16" viewBox="0 0 12 16"><path d="M0.5 0.5h7l4 4v11h-11z" fill="#f1f1ea"/><path d="M7.5 0.5v4h4z" fill="#c9c9c2"/></svg><span style="left:701px;top:66.50px;line-height:18px;font-size:13px;color:#c4c7ce;white-space:pre;letter-spacing:0.88px;">Text Import</span><svg style="left:992px;top:70px" width="12" height="11" viewBox="0 0 12 11"><path d="M6 1.2l4.6 4.6h-9.2z" fill="#c5c8cf"/><rect x="1.4" y="7.2" width="9.2" height="2" fill="#c5c8cf"/></svg><svg style="left:1021px;top:70px" width="11" height="11" viewBox="0 0 11 11"><path d="M4.5 2h4.5v4.5z" fill="#6e7480"/><path d="M2 4.5v4.5h4.5z" fill="#6e7480"/></svg><svg style="left:1048px;top:67px" width="16" height="16" viewBox="0 0 16 16"><circle cx="8" cy="8" r="7.2" fill="#f04f5c"/><path d="M5.6 5.6l4.8 4.8M10.4 5.6l-4.8 4.8" stroke="#3b2a33" stroke-width="1.6" stroke-linecap="round"/></svg><span style="left:465px;top:97.50px;line-height:18px;font-size:13px;color:#333;white-space:pre;font-weight:bold;letter-spacing:0.87px;">Import</span><span style="left:477.3px;top:126.50px;line-height:18px;font-size:13px;color:#3a3a3a;white-space:pre;letter-spacing:0.05px;">Ch<u>a</u>racter set:</span><div class="combo" style="left:572px;top:121px;width:298px;height:28px"></div><span style="left:575.5px;top:126.50px;line-height:18px;font-size:13px;color:#3a3a3a;white-space:pre;letter-spacing:0.04px;">Western Europe (DOS/OS2-865/Nordic)</span><svg style="left:855.0px;top:133.0px" width="9" height="5" viewBox="0 0 9 5"><path d="M0 0h9l-4.5 5z" fill="#2b2b2b"/></svg><span style="left:477.3px;top:161.50px;line-height:18px;font-size:13px;color:#3a3a3a;white-space:pre;letter-spacing:0.23px;"><u>L</u>anguage:</span><div class="combo" style="left:572px;top:155px;width:298px;height:28px"></div><span style="left:575.5px;top:160.50px;line-height:18px;font-size:13px;color:#3a3a3a;white-space:pre;letter-spacing:0.06px;">Default - German (Germany)</span><svg style="left:855.0px;top:167.0px" width="9" height="5" viewBox="0 0 9 5"><path d="M0 0h9l-4.5 5z" fill="#2b2b2b"/></svg><span style="left:477.3px;top:195.50px;line-height:18px;font-size:13px;color:#3a3a3a;white-space:pre;letter-spacing:0.28px;">From ro<u>w</u>:</span><div class="entry" style="left:572px;top:189px;width:109px;height:30px"></div><div style="left:639px;top:190px;width:1px;height:28px;background:#c9c9c9"></div><div style="left:660px;top:190px;width:1px;height:28px;background:#c9c9c9"></div><span style="left:575.5px;top:195.50px;line-height:18px;font-size:13px;color:#3a3a3a;white-space:pre;">1</span><div style="left:643px;top:203.2px;width:14px;height:2px;background:#2b2b2b"></div><div style="left:663.5px;top:203.2px;width:14px;height:2px;background:#2b2b2b"></div><div style="left:669.5px;top:197.2px;width:2px;height:14px;background:#2b2b2b"></div><span style="left:465px;top:231.50px;line-height:18px;font-size:13px;color:#333;white-space:pre;font-weight:bold;letter-spacing:0.37px;">Separator Options</span><div class="rb" style="left:480.500px;top:258.500px"></div><span style="left:503.4px;top:257.50px;line-height:18px;font-size:13px;color:#3a3a3a;white-space:pre;letter-spacing:0.24px;"><u>F</u>ixed width</span><div class="rb" style="left:774px;top:258.500px"></div><div style="left:778.25px;top:262.75px;width:6.5px;height:6.5px;background:#2e2e2e;border-radius:4px"></div><span style="left:796.8px;top:257.50px;line-height:18px;font-size:13px;color:#3a3a3a;white-space:pre;letter-spacing:0.1px;"><u>S</u>eparated by</span><div class="cb" style="left:492px;top:290px"></div><svg style="left:492px;top:290px" width="16" height="16" viewBox="0 0 16 16"><path d="M3.400 6.400l4.800 4.700 6.700-8" fill="none" stroke="#2a2a2a" stroke-width="2.500" stroke-linecap="butt" stroke-linejoin="miter"/></svg><span style="left:515.4px;top:289.50px;line-height:18px;font-size:13px;color:#3a3a3a;white-space:pre;letter-spacing:-0.12px;"><u>T</u>ab</span><div class="cb" style="left:576px;top:290px"></div><span style="left:599.6px;top:289.50px;line-height:18px;font-size:13px;color:#3a3a3a;white-space:pre;letter-spacing:0.18px;"><u>C</u>omma</span><div class="cb" style="left:686px;top:290px"></div><span style="left:710px;top:289.50px;line-height:18px;font-size:13px;color:#3a3a3a;white-space:pre;letter-spacing:0.03px;">S<u>e</u>micolon</span><div class="cb" style="left:809px;top:290px"></div><span style="left:832.4px;top:289.50px;line-height:18px;font-size:13px;color:#3a3a3a;white-space:pre;letter-spacing:-0.45px;">S<u>p</u>ace</span><div class="cb" style="left:905px;top:290px"></div><span style="left:928.2px;top:289.50px;line-height:18px;font-size:13px;color:#3a3a3a;white-space:pre;letter-spacing:0.66px;">Othe<u>r</u></span><div class="entry" style="left:1010px;top:283px;width:52px;height:30px"></div><div class="cb" style="left:492px;top:326px"></div><span style="left:515.4px;top:325.50px;line-height:18px;font-size:13px;color:#3a3a3a;white-space:pre;letter-spacing:0.26px;">Merge <u>d</u>elimiters</span><div class="cb" style="left:686px;top:326px"></div><span style="left:710px;top:325.50px;line-height:18px;font-size:13px;color:#3a3a3a;white-space:pre;letter-spacing:-0.12px;">Tr<u>i</u>m spaces</span><span style="left:902.2px;top:325.50px;line-height:18px;font-size:13px;color:#3a3a3a;white-space:pre;letter-spacing:0.32px;">Strin<u>g</u> delimiter:</span><div class="entry" style="left:1010px;top:319px;width:52px;height:30px"></div><div style="left:1042px;top:320px;width:20px;height:28px;background:linear-gradient(#dedede,#c9c9c9);border-left:1px solid #a9a9a9;border-radius:0 3px 3px 0"></div><span style="left:1014.5px;top:325.50px;line-height:18px;font-size:13px;color:#3a3a3a;white-space:pre;">&quot;</span><svg style="left:1047.5px;top:332.0px" width="9" height="5" viewBox="0 0 9 5"><path d="M0 0h9l-4.5 5z" fill="#2b2b2b"/></svg><span style="left:465px;top:361.50px;line-height:18px;font-size:13px;color:#333;white-space:pre;font-weight:bold;letter-spacing:0.46px;">Other Options</span><div class="cb" style="left:480px;top:388px"></div><span style="left:503.4px;top:387.50px;line-height:18px;font-size:13px;color:#3a3a3a;white-space:pre;letter-spacing:0.3px;">F<u>o</u>rmat quoted field as text</span><div class="cb" style="left:678px;top:388px"></div><svg style="left:678px;top:388px" width="16" height="16" viewBox="0 0 16 16"><path d="M3.400 6.400l4.800 4.700 6.700-8" fill="none" stroke="#2a2a2a" stroke-width="2.500" stroke-linecap="butt" stroke-linejoin="miter"/></svg><span style="left:701.5px;top:387.50px;line-height:18px;font-size:13px;color:#3a3a3a;white-space:pre;letter-spacing:0.11px;">Detect special <u>n</u>umbers</span><div class="cb" style="left:876px;top:388px"></div><svg style="left:876px;top:388px" width="16" height="16" viewBox="0 0 16 16"><path d="M3.400 6.400l4.800 4.700 6.700-8" fill="none" stroke="#2a2a2a" stroke-width="2.500" stroke-linecap="butt" stroke-linejoin="miter"/></svg><span style="left:899.3px;top:387.50px;line-height:18px;font-size:13px;color:#3a3a3a;white-space:pre;letter-spacing:0.02px;">S<u>k</u>ip empty cells</span><span style="left:465px;top:419.50px;line-height:18px;font-size:13px;color:#333;white-space:pre;font-weight:bold;letter-spacing:0.02px;">Fields</span><span style="left:477.5px;top:448.50px;line-height:18px;font-size:13px;color:#8d8d8d;white-space:pre;letter-spacing:0.37px;">Column t<u>y</u>pe:</span><div class="combo" style="left:570px;top:443px;width:95px;height:28px;border-color:#929292"></div><svg style="left:650.5px;top:455.0px" width="9" height="5" viewBox="0 0 9 5"><path d="M0 0h9l-4.5 5z" fill="#8a8a8a"/></svg><div style="left:477px;top:477px;width:588px;height:185px;background:#cfcfcf;border:1px solid #8e8e8e"></div><div style="left:478px;top:478px;width:406px;height:19px;background:#cdcdcd;border-bottom:1px solid #8e8e8e;border-right:1px solid #8e8e8e"></div><div style="left:478px;top:478px;width:21px;height:167px;background:#cdcdcd;border-right:1px solid #9c9c9c"></div><div style="left:499px;top:478px;width:1px;height:19px;background:#8e8e8e"></div><span style="left:501.5px;top:478.50px;line-height:18px;font-size:13px;color:#4a4a4a;white-space:pre;letter-spacing:0.15px;">Standard</span><div style="left:500px;top:497px;width:383px;height:148px;background:#fff"></div><div style="left:478px;top:497px;width:406px;height:148px;overflow:hidden"><span style="left:21px;top:-1px;font:13.33px/16px 'Liberation Mono', monospace;color:#1c1c1c;white-space:pre">Landratsamt Rhein-Neckar-Kreis</span><div style="left:0;top:15.5px;width:21px;height:1px;background:#a4a4a4"></div><span style="right:387.5px;top:1.5px;font-size:13px;line-height:16px;color:#4a4a4a">4</span><div style="left:0;top:15.5px;width:405px;height:1px;background:#c2c2c2"></div><span style="left:21px;top:15px;font:13.33px/16px 'Liberation Mono', monospace;color:#1c1c1c;white-space:pre">Postfach 104680</span><div style="left:0;top:31.5px;width:21px;height:1px;background:#a4a4a4"></div><span style="right:387.5px;top:17.5px;font-size:13px;line-height:16px;color:#4a4a4a">5</span><div style="left:0;top:31.5px;width:405px;height:1px;background:#c2c2c2"></div><span style="left:21px;top:31px;font:13.33px/16px 'Liberation Mono', monospace;color:#1c1c1c;white-space:pre">69036 Heidelberg</span><div style="left:0;top:47.5px;width:21px;height:1px;background:#a4a4a4"></div><span style="right:387.5px;top:33.5px;font-size:13px;line-height:16px;color:#4a4a4a">6</span><div style="left:0;top:47.5px;width:405px;height:1px;background:#c2c2c2"></div><span style="left:21px;top:47px;font:13.33px/16px 'Liberation Mono', monospace;color:#1c1c1c;white-space:pre">Kurf&#x207F;rsten Anlage 38-40</span><div style="left:0;top:63.5px;width:21px;height:1px;background:#a4a4a4"></div><span style="right:387.5px;top:49.5px;font-size:13px;line-height:16px;color:#4a4a4a">7</span><div style="left:0;top:63.5px;width:405px;height:1px;background:#c2c2c2"></div><span style="left:21px;top:63px;font:13.33px/16px 'Liberation Mono', monospace;color:#1c1c1c;white-space:pre">69115 Heidelberg</span><div style="left:0;top:79.5px;width:21px;height:1px;background:#a4a4a4"></div><span style="right:387.5px;top:65.5px;font-size:13px;line-height:16px;color:#4a4a4a">8</span><div style="left:0;top:79.5px;width:405px;height:1px;background:#c2c2c2"></div><span style="left:21px;top:79px;font:13.33px/16px 'Liberation Mono', monospace;color:#1c1c1c;white-space:pre">Telefon: 06221/522-0</span><div style="left:0;top:95.5px;width:21px;height:1px;background:#a4a4a4"></div><span style="right:387.5px;top:81.5px;font-size:13px;line-height:16px;color:#4a4a4a">9</span><div style="left:0;top:95.5px;width:405px;height:1px;background:#c2c2c2"></div><span style="left:21px;top:95px;font:13.33px/16px 'Liberation Mono', monospace;color:#1c1c1c;white-space:pre">Fax: 06221/522-477</span><div style="left:0;top:111.5px;width:21px;height:1px;background:#a4a4a4"></div><span style="right:387.5px;top:97.5px;font-size:13px;line-height:16px;color:#4a4a4a">10</span><div style="left:0;top:111.5px;width:405px;height:1px;background:#c2c2c2"></div><span style="left:21px;top:111px;font:13.33px/16px 'Liberation Mono', monospace;color:#1c1c1c;white-space:pre">E-Mail: post@rhein-neckar-kreis.de</span><div style="left:0;top:127.5px;width:21px;height:1px;background:#a4a4a4"></div><span style="right:387.5px;top:113.5px;font-size:13px;line-height:16px;color:#4a4a4a">11</span><div style="left:0;top:127.5px;width:405px;height:1px;background:#c2c2c2"></div><span style="left:21px;top:127px;font:13.33px/16px 'Liberation Mono', monospace;color:#1c1c1c;white-space:pre">Homepage: www.rhein-neckar-kreis.de</span><div style="left:0;top:143.5px;width:21px;height:1px;background:#a4a4a4"></div><span style="right:387.5px;top:129.5px;font-size:13px;line-height:16px;color:#4a4a4a">12</span><div style="left:0;top:143.5px;width:405px;height:1px;background:#c2c2c2"></div><span style="left:21px;top:143px;font:13.33px/16px 'Liberation Mono', monospace;color:#1c1c1c;white-space:pre">Rhein-Neckar-Kreis in Zahlen: Regionaldatenbank</span></div><div style="left:1048px;top:478px;width:16px;height:168px;background:linear-gradient(90deg,#dcdcdc,#f6f6f6 40%,#fbfbfb)"></div><div style="left:1048px;top:478px;width:16px;height:36px;background:linear-gradient(#fff,rgba(255,255,255,0))"></div><div style="left:1052px;top:519px;width:9px;height:112px;border:1px solid #868686;border-radius:4.5px;background:#d2d2d2"></div><div style="left:478px;top:645px;width:570px;height:16px;background:#f8f8f8"></div><div style="left:482px;top:649px;width:564px;height:9px;border:1px solid #868686;border-radius:4.5px;background:#d2d2d2"></div><div style="left:1048px;top:646px;width:16px;height:15px;background:#cdcdcd"></div><div class="btn" style="left:470.500px;top:679.500px;width:84.500px;height:31px"></div><span style="left:498px;top:686.50px;line-height:18px;font-size:13px;color:#3a3a3a;white-space:pre;letter-spacing:0.19px;"><u>H</u>elp</span><div class="btn" style="left:884px;top:679.500px;width:85px;height:31px"></div><span style="left:917.5px;top:686.50px;line-height:18px;font-size:13px;color:#3a3a3a;white-space:pre;letter-spacing:-0.65px;"><u>O</u>K</span><div class="btn" style="left:975px;top:679.500px;width:85px;height:31px"></div><span style="left:998.3px;top:686.50px;line-height:18px;font-size:13px;color:#3a3a3a;white-space:pre;letter-spacing:-0.29px;"><u>C</u>ancel</span>
</body></html>
